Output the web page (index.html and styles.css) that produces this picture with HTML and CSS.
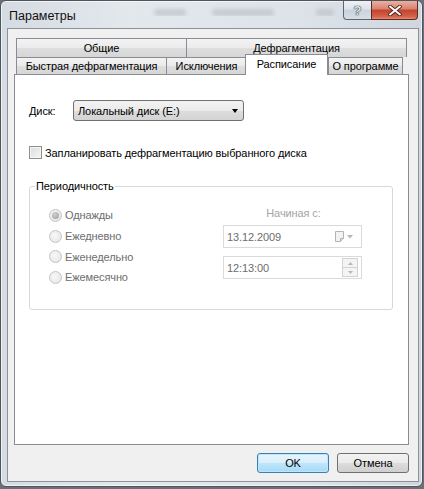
FILE: index.html
```html
<!DOCTYPE html>
<html lang="ru">
<head>
    <meta charset="UTF-8">
    <title>Параметры</title>
    <link rel="stylesheet" href="styles.css">
</head>
<body>
    <div class="window">
        <div class="titlebar">
            <span class="title">Параметры</span>
            <div class="glass">
                <span class="smudge s1"></span>
                <span class="smudge s2"></span>
                <span class="smudge s3"></span>
            </div>
            <div class="caption-buttons">
                <div class="cap help">?</div>
                <div class="cap close">
                    <svg width="14" height="11" viewBox="0 0 14 11">
                        <path d="M2 1.5 L12 9.5 M12 1.5 L2 9.5" stroke="#4a2019" stroke-width="3.6" stroke-linecap="round"/>
                        <path d="M2 1.5 L12 9.5 M12 1.5 L2 9.5" stroke="#fff" stroke-width="2" stroke-linecap="round"/>
                    </svg>
                </div>
            </div>
        </div>

        <div class="client">
            <div class="tabs">
                <div class="tabrow">
                    <div class="tab t-general">Общие</div>
                    <div class="tab t-defrag">Дефрагментация</div>
                </div>
                <div class="tabrow front">
                    <div class="tab t-quick">Быстрая дефрагментация</div>
                    <div class="tab t-excl">Исключения</div>
                    <div class="tab t-sched active">Расписание</div>
                    <div class="tab t-about">О программе</div>
                </div>
            </div>

            <div class="page">
                <div class="disk-row">
                    <span class="disk-label">Диск:</span>
                    <div class="combo">
                        <span>Локальный диск (E:)</span>
                        <span class="combo-arrow"></span>
                    </div>
                </div>

                <div class="check-row">
                    <span class="checkbox"></span>
                    <span>Запланировать дефрагментацию выбранного диска</span>
                </div>

                <fieldset class="group">
                    <legend>Периодичность</legend>
                    <div class="group-body">
                        <div class="radios">
                            <div class="radio-row"><span class="radio checked"></span>Однажды</div>
                            <div class="radio-row"><span class="radio"></span>Ежедневно</div>
                            <div class="radio-row"><span class="radio"></span>Еженедельно</div>
                            <div class="radio-row"><span class="radio"></span>Ежемесячно</div>
                        </div>
                        <div class="start">
                            <div class="start-label">Начиная с:</div>
                            <div class="field date">
                                <span>13.12.2009</span>
                                <span class="date-btn">
                                    <svg width="9" height="11" viewBox="0 0 9 11">
                                        <path d="M0.5 0.5 H8.5 V7.5 L5.5 10.5 H0.5 Z" fill="#f2f2f2" stroke="#b4b4b4"/>
                                        <path d="M8.5 7.5 H5.5 V10.5" fill="#dcdcdc" stroke="#b4b4b4"/>
                                    </svg>
                                    <svg width="6" height="4" viewBox="0 0 6 4"><path d="M0 0 H6 L3 3.5 Z" fill="#b8b8b8"/></svg>
                                </span>
                            </div>
                            <div class="field time">
                                <span>12:13:00</span>
                                <span class="spin">
                                    <span class="spin-half"><svg width="5" height="3" viewBox="0 0 5 3"><path d="M0 3 H5 L2.5 0 Z" fill="#b8b8b8"/></svg></span>
                                    <span class="spin-half"><svg width="5" height="3" viewBox="0 0 5 3"><path d="M0 0 H5 L2.5 3 Z" fill="#b8b8b8"/></svg></span>
                                </span>
                            </div>
                        </div>
                    </div>
                </fieldset>
            </div>

            <div class="buttons">
                <div class="btn default">OK</div>
                <div class="btn">Отмена</div>
            </div>
        </div>
    </div>
</body>
</html>
```

FILE: styles.css
```css
* { box-sizing: border-box; }
body { margin: 0; background: #6b7078; overflow: hidden; font-family: "Liberation Sans", Arial, sans-serif; font-size: 11px; letter-spacing: -0.1px; color: #000; }

/* window frame */
.window { width: 423px; height: 487px; border: 1px solid #4f555c; border-radius: 6px; background: linear-gradient(90deg, #d5dbe2, #e3e8ed 30%, #dde3e9 70%, #cfd6de); padding: 0 3px 4px 6px; display: flex; flex-direction: column; box-shadow: inset 0 0 0 1px rgba(255,255,255,0.6); }
.titlebar { height: 27px; display: flex; align-items: flex-start; }
.title { font-size: 12.5px; letter-spacing: 0; color: #111; padding: 8px 0 0 2px; flex-shrink: 0; }
.glass { flex: 1; min-width: 0; overflow: hidden; display: flex; padding: 8px 0 0 78px; gap: 26px; }
.smudge { flex-shrink: 0; height: 7px; background: #b9bfc6; border-radius: 3px; filter: blur(2px); opacity: 0.7; }
.s1 { width: 32px; }
.s2 { width: 62px; }
.s3 { width: 18px; margin-left: 16px; }
.caption-buttons { display: flex; margin-right: 1px; flex-shrink: 0; }
.cap { height: 19px; display: flex; align-items: center; justify-content: center; border: 1px solid #5d6670; border-top: none; }
.help { width: 28px; border-radius: 0 0 0 4px; border-right: none; background: linear-gradient(#eef1f5, #dde3ea 45%, #c9d2dc 50%, #d7dee6); font-weight: bold; font-size: 13px; color: #dfe4ea; text-shadow: 0 0 1px #39424c, 0 0 1px #39424c, 0 0 1px #39424c; }
.close { width: 47px; border-radius: 0 0 4px 0; border-color: #5c2a22; background: linear-gradient(#eab0a3, #d9826f 45%, #c4432c 50%, #d2604a 85%, #e28b6f); }

.client { flex: 1; border: 1px solid #8c9299; background: #f0f0f0; padding: 9px 9px 0 6px; display: flex; flex-direction: column; }

/* tabs */
.tabs { margin-left: 2px; }
.tabrow { display: flex; align-items: flex-end; height: 19px; }
.tabrow.front { height: 17px; }
.tab { height: 100%; border: 1px solid #898c95; border-bottom: none; margin-right: -1px; background: linear-gradient(#f3f3f3, #ebebeb 48%, #dedede 52%, #d6d6d6); display: flex; align-items: center; justify-content: center; white-space: nowrap; }
.t-general { width: 171px; }
.t-defrag { width: 221px; }
.t-quick { width: 151px; }
.t-excl { width: 81px; }
.t-sched { width: 83px; }
.t-about { width: 75px; }
.tab.active { height: 21px; margin: -3px 0 -1px -1px; background: #fff; position: relative; z-index: 1; padding-bottom: 2px; }

/* page */
.page { height: 371px; border: 1px solid #898c95; background: #fff; padding: 25px 0 0 14px; }
.disk-row { display: flex; align-items: center; height: 21px; }
.disk-label { width: 44px; }
.combo { width: 171px; height: 21px; border: 1px solid #707070; border-radius: 3px; background: linear-gradient(#f2f2f2, #ebebeb 50%, #dddddd 51%, #d3d3d3); display: flex; align-items: center; justify-content: space-between; padding: 0 5px 0 4px; }
.combo-arrow { width: 0; height: 0; border-left: 3.5px solid transparent; border-right: 3.5px solid transparent; border-top: 4px solid #000; }

.check-row { display: flex; align-items: center; height: 15px; margin-top: 24px; gap: 3px; }
.checkbox { width: 13px; height: 13px; border: 1px solid #8e8f8f; background: linear-gradient(135deg, #dcdcdc, #f5f5f5); box-shadow: inset 0 0 0 1px #f4f4f4; }

.group { width: 364px; margin: 19px 0 0; padding: 12px 0 21px 0; border: 1px solid #d5d9dd; border-radius: 3px; }
.group legend { padding: 0 1px; margin-left: 5px; line-height: 14px; }
.group-body { display: flex; padding-left: 19px; }
.radios { width: 174px; color: #6d6d6d; }
.radio-row { height: 20.7px; display: flex; align-items: center; gap: 3px; }
.radio { width: 13px; height: 13px; border-radius: 50%; border: 1px solid #c4c4c4; background: radial-gradient(circle at 40% 40%, #f8f8f8, #e2e2e2); display: flex; align-items: center; justify-content: center; }
.radio.checked::after { content: ""; width: 7px; height: 7px; border-radius: 50%; background: radial-gradient(circle at 40% 35%, #d0d0d0, #9a9a9a); }

.start { width: 139px; display: flex; flex-direction: column; }
.start-label { height: 16px; text-align: center; color: #a3a3a3; padding: 2px 0 0 2px; }
.field { height: 23px; border: 1px solid #dadada; display: flex; align-items: center; justify-content: space-between; padding-left: 3px; color: #6d6d6d; }
.date { margin-top: 4px; padding-right: 8px; }
.date-btn { display: flex; align-items: center; gap: 3px; }
.time { margin-top: 8px; padding-right: 3px; }
.spin { width: 16px; height: 19px; display: flex; flex-direction: column; }
.spin-half { flex: 1; border: 1px solid #d3d3d3; background: #f4f4f4; display: flex; align-items: center; justify-content: center; }
.spin-half + .spin-half { border-top: none; }

/* dialog buttons */
.buttons { display: flex; justify-content: flex-end; gap: 8px; margin-top: 8px; }
.btn { width: 72px; height: 20px; border: 1px solid #707070; border-radius: 3px; background: linear-gradient(#f2f2f2, #ebebeb 50%, #dddddd 51%, #cfcfcf); display: flex; align-items: center; justify-content: center; }
.btn.default { border-color: #3c7fb1; background: linear-gradient(#e8f5fd, #d9effc 50%, #bee6fd 51%, #a7d9f5); box-shadow: inset 0 0 0 1px #bde6fb; }
```
